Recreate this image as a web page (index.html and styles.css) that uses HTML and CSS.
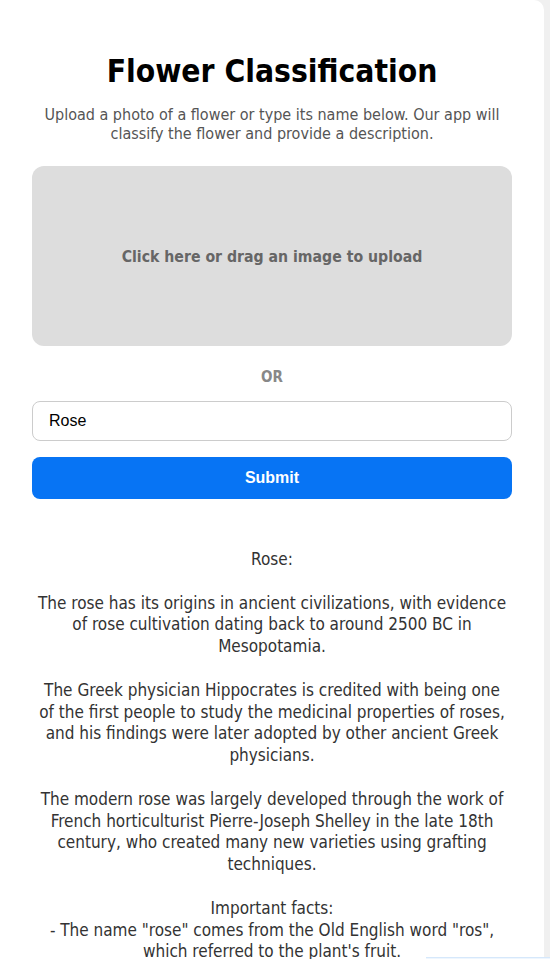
FILE: index.html
```html
<!DOCTYPE html>
<html lang="en">
<head>
<meta charset="utf-8">
<title>Flower Classification</title>
<link rel="stylesheet" href="styles.css">
</head>
<body>
<main class="card">
  <h1 class="title">Flower Classification</h1>
  <p class="subtitle">Upload a photo of a flower or type its name below. Our app will classify the flower and provide a description.</p>
  <label class="dropzone">
    <span class="dropzone-text">Click here or drag an image to upload</span>
  </label>
  <div class="or">OR</div>
  <input class="name-input" type="text" value="Rose">
  <button class="submit" type="button">Submit</button>
  <div class="result">Rose:

The rose has its origins in ancient civilizations, with evidence of rose cultivation dating back to around 2500 BC in Mesopotamia.

The Greek physician Hippocrates is credited with being one of the first people to study the medicinal properties of roses, and his findings were later adopted by other ancient Greek physicians.

The modern rose was largely developed through the work of French horticulturist Pierre-Joseph Shelley in the late 18th century, who created many new varieties using grafting techniques.

Important facts:
- The name "rose" comes from the Old English word "ros", which referred to the plant's fruit.</div>
</main>
<div class="corner-box"></div>
</body>
</html>
```
FILE: styles.css
```css
html, body {
  margin: 0;
  padding: 0;
}
body {
  background: #f0f0f0;
  font-family: "DejaVu Sans Condensed", "DejaVu Sans", sans-serif;
  overflow: hidden;
  height: 959px;
}
.card {
  width: 480px;
  padding: 52px 32px 40px;
  background: #fff;
  border-radius: 0 10px 10px 0;
  display: flex;
  flex-direction: column;
}
.title {
  margin: 0;
  font-size: 31.5px;
  line-height: 38px;
  font-weight: bold;
  color: #000;
  text-align: center;
}
.subtitle {
  margin: 15px 0 0;
  font-size: 16px;
  line-height: 19px;
  color: #555;
  text-align: center;
}
.dropzone {
  margin-top: 23px;
  height: 180px;
  background: #dddddd;
  border-radius: 12px;
  display: flex;
  align-items: center;
  justify-content: center;
}
.dropzone-text {
  font-size: 15.7px;
  font-weight: bold;
  color: #666;
}
.or {
  margin-top: 21px;
  font-size: 15px;
  line-height: 20px;
  font-weight: bold;
  color: #888;
  text-align: center;
}
.name-input {
  margin-top: 14px;
  box-sizing: border-box;
  height: 40px;
  width: 100%;
  padding: 0 16px;
  border: 1px solid #ccc;
  border-radius: 8px;
  font-family: "Liberation Sans", Arial, sans-serif;
  font-size: 16px;
  color: #000;
  background: #fff;
  outline: none;
}
.submit {
  margin-top: 16px;
  height: 42px;
  width: 100%;
  border: none;
  border-radius: 8px;
  background: #0774f4;
  color: #fff;
  font-family: "Liberation Sans", Arial, sans-serif;
  font-size: 16px;
  font-weight: bold;
}
.result {
  margin-top: 50px;
  padding: 0 3px;
  white-space: pre-wrap;
  font-size: 17px;
  line-height: 21.8px;
  color: #333;
  text-align: center;
}
.corner-box {
  position: fixed;
  left: 426px;
  top: 957px;
  width: 124px;
  height: 10px;
  background: #eef6fe;
  border-top: 1px solid #d6e8fb;
}
```
